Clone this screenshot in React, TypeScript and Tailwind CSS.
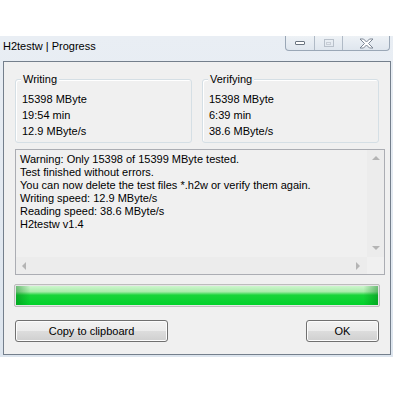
import React from "react";

const font = { fontFamily: '"Liberation Sans", Arial, sans-serif' };

function GroupBox({ title, lines }: { title: string; lines: string[] }) {
  return (
    <div className="relative h-[64px] flex-1 rounded-[3px] border border-[#d5dfe5] shadow-[inset_1px_1px_0_#ffffff]">
      <span className="absolute left-[5px] top-[-9px] bg-[#f0f0f0] px-[2px] text-[11px] leading-[16px] text-black">
        {title}
      </span>
      <div className="flex flex-col pl-[6px] pt-[11px] text-[11px] leading-[16px] text-black">
        {lines.map((l) => (
          <div key={l}>{l}</div>
        ))}
      </div>
    </div>
  );
}

function Arrow({ dir }: { dir: "up" | "down" | "left" | "right" }) {
  const pts = {
    up: "0,4 4,0 8,4",
    down: "0,0 4,4 8,0",
    left: "4,0 0,4 4,8",
    right: "0,0 4,4 0,8",
  }[dir];
  const vert = dir === "up" || dir === "down";
  return (
    <svg width={vert ? 8 : 5} height={vert ? 5 : 8} viewBox={vert ? "0 0 8 5" : "0 0 5 8"}>
      <polygon points={pts} fill="#b4b4b4" />
    </svg>
  );
}

function Button({ label, className }: { label: string; className: string }) {
  return (
    <div
      className={`flex h-[22px] items-center justify-center rounded-[3px] border border-[#707070] bg-[linear-gradient(#f2f2f2_0%,#ebebeb_50%,#dddddd_50%,#cfcfcf_100%)] text-[11px] text-black shadow-[inset_0_0_0_1px_#fcfcfc] ${className}`}
    >
      {label}
    </div>
  );
}

export default function App() {
  const log = [
    "Warning: Only 15398 of 15399 MByte tested.",
    "Test finished without errors.",
    "You can now delete the test files *.h2w or verify them again.",
    "Writing speed: 12.9 MByte/s",
    "Reading speed: 38.6 MByte/s",
    "H2testw v1.4",
  ];

  return (
    <div className="flex h-[393px] w-[393px] flex-col bg-white" style={font}>
      <div className="h-[36px] shrink-0" />
      <div className="flex flex-col bg-[linear-gradient(#e9eef4,#dde5ee)] pb-[2px] pl-[3px] pr-[2px]">
        {/* title bar */}
        <div className="flex h-[25px] items-start">
          <div className="pt-[2px] text-[11px] leading-[16px] text-black">H2testw | Progress</div>
          <div className="ml-auto mr-[1px] flex h-[15px] items-stretch rounded-b-[4px] border border-t-0 border-[#9aa7b6] bg-[linear-gradient(#eef2f6,#dfe6ee)]">
            <div className="flex w-[29px] items-center justify-center border-r border-[#b0bac6]">
              <div className="h-[4px] w-[10px] rounded-[1px] border border-[#6a7480] bg-white" />
            </div>
            <div className="flex w-[28px] items-center justify-center border-r border-[#b0bac6]">
              <div className="flex h-[8px] w-[10px] items-center justify-center border border-[#b8c0ca]">
                <div className="h-[3px] w-[5px] border border-[#c8ced6]" />
              </div>
            </div>
            <div className="flex w-[46px] items-center justify-center">
              <svg width="15" height="11" viewBox="0 0 15 11">
                <path
                  d="M1 1 H4.5 L7.5 4 L10.5 1 H14 L9.5 5.5 L14 10 H10.5 L7.5 7 L4.5 10 H1 L5.5 5.5 Z"
                  fill="#ffffff"
                  stroke="#7c8694"
                  strokeWidth="1"
                  strokeLinejoin="round"
                />
              </svg>
            </div>
          </div>
        </div>
        {/* client area */}
        <div className="flex h-[294px] flex-col border border-[#747f8c] bg-[#f0f0f0] px-[10px] pt-[17px]">
          <div className="flex gap-[10px] pl-[1px] pr-[1px]">
            <GroupBox title="Writing" lines={["15398 MByte", "19:54 min", "12.9 MByte/s"]} />
            <GroupBox title="Verifying" lines={["15398 MByte", "6:39 min", "38.6 MByte/s"]} />
          </div>
          {/* log box */}
          <div className="mt-[6px] ml-[1px] mr-[-5px] flex h-[126px] flex-col border border-[#abadb3] bg-[#f0f0f0]">
            <div className="flex min-h-0 flex-1">
              <div className="flex-1 pl-[4px] pt-[3px] text-[11px] leading-[13px] text-black">
                {log.map((l) => (
                  <div key={l} className="whitespace-nowrap">
                    {l}
                  </div>
                ))}
              </div>
              <div className="flex w-[17px] flex-col items-center justify-between bg-[#ececec] py-[6px]">
                <Arrow dir="up" />
                <Arrow dir="down" />
              </div>
            </div>
            <div className="flex h-[17px]">
              <div className="flex flex-1 items-center justify-between bg-[#ececec] px-[6px]">
                <Arrow dir="left" />
                <Arrow dir="right" />
              </div>
              <div className="w-[17px] bg-[#f0f0f0]" />
            </div>
          </div>
          {/* progress */}
          <div className="mt-[9px] h-[23px] rounded-[2px] border border-[#bcbcbc] bg-[#e6e6e6] p-[1px]">
            <div className="relative h-full w-full bg-[linear-gradient(#cdf6cd_0%,#a9ecab_30%,#19d43a_48%,#00d22a_100%)]">
              <div className="absolute inset-0 bg-[linear-gradient(90deg,rgba(0,120,20,0.45)_0%,rgba(0,120,20,0)_4%,rgba(0,120,20,0)_96%,rgba(0,120,20,0.45)_100%)]" />
            </div>
          </div>
          {/* buttons */}
          <div className="mt-[13px] flex justify-between pl-[1px] pr-[1px]">
            <Button label="Copy to clipboard" className="w-[153px]" />
            <Button label="OK" className="w-[73px]" />
          </div>
        </div>
      </div>
    </div>
  );
}
